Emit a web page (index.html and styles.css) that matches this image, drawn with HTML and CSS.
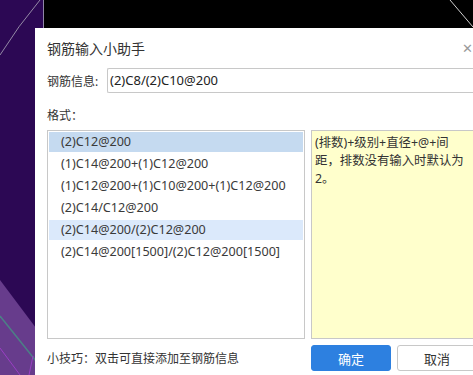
FILE: index.html
```html
<!DOCTYPE html>
<html lang="zh-CN">
  <head>
    <meta charset="UTF-8" />
    <title>钢筋输入小助手</title>
    <link rel="stylesheet" href="styles.css">
  </head>
  <body>
    <svg class="backdrop" width="473" height="375" viewBox="0 0 473 375">
      <rect x="0" y="0" width="473" height="375" fill="#2c0854" />
      <rect x="43" y="0" width="430" height="30" fill="#000000" />
      <line x1="43.5" y1="0" x2="43.5" y2="30" stroke="#8f86a6" stroke-width="1" />
      <path d="M0 55 Q18 26 40 0" fill="none" stroke="#948aa6" stroke-width="1" />
      <line x1="450" y1="0" x2="473" y2="27" stroke="#cfcfcf" stroke-width="1" />
      <polygon points="0,280 36,328 36,375 0,375" fill="#673c8c" />
      <line x1="0" y1="316" x2="36" y2="361" stroke="#4c7f86" stroke-width="1.5" />
      <line x1="0" y1="348" x2="20" y2="375" stroke="#9a3fc4" stroke-width="1" />
      <line x1="33" y1="356" x2="29" y2="375" stroke="#9a3fc4" stroke-width="1" />
    </svg>

    <div class="dialog">
      <div class="title-bar">
        <span class="title">钢筋输入小助手</span>
        <span class="close">&#x2715;</span>
      </div>

      <div class="field-row">
        <label class="field-label">钢筋信息:</label>
        <div class="field-input">(2)C8/(2)C10@200</div>
      </div>

      <div class="section-label">格式：</div>

      <div class="panes">
        <ul class="format-list">
          <li class="format-item selected">(2)C12@200</li>
          <li class="format-item">(1)C14@200+(1)C12@200</li>
          <li class="format-item">(1)C12@200+(1)C10@200+(1)C12@200</li>
          <li class="format-item">(2)C14/C12@200</li>
          <li class="format-item hover">(2)C14@200/(2)C12@200</li>
          <li class="format-item">(2)C14@200[1500]/(2)C12@200[1500]</li>
        </ul>
        <div class="hint">
          <p class="hint-text">(排数)+级别+直径+@+间距，排数没有输入时默认为2。</p>
        </div>
      </div>

      <div class="footer">
        <span class="tip">小技巧：双击可直接添加至钢筋信息</span>
        <button class="btn btn-primary">确定</button>
        <button class="btn">取消</button>
      </div>
    </div>
  </body>
</html>
```

FILE: styles.css
```css
* {
  margin: 0;
  padding: 0;
  box-sizing: border-box;
  font-family: "Noto Sans", "Noto Sans CJK SC", sans-serif;
}

body {
  width: 473px;
  height: 375px;
  overflow: hidden;
  position: relative;
  background-color: #2c0854;
  color: #333333;
  padding: 28px 0 0 35px;
}

.backdrop {
  position: absolute;
  top: 0;
  left: 0;
  z-index: 0;
}

.dialog {
  position: relative;
  z-index: 1;
  width: 457px;
  height: 360px;
  background-color: #ffffff;
  padding: 0 15px 0 12px;
}

.title-bar {
  height: 40px;
  display: flex;
  align-items: center;
  justify-content: space-between;
}

.title {
  font-size: 14px;
  color: #333333;
}

.close {
  font-size: 13px;
  color: #9a9a9a;
  margin-right: 4px;
}

.field-row {
  display: flex;
  align-items: center;
  height: 25px;
}

.field-label {
  font-size: 12px;
  width: 60px;
  color: #333333;
}

.field-input {
  flex: 1;
  height: 25px;
  line-height: 23px;
  border: 1px solid #c8c8c8;
  border-right: none;
  border-radius: 2px 0 0 2px;
  padding-left: 2px;
  font-size: 13px;
  color: #222222;
}

.section-label {
  font-size: 12px;
  line-height: 18px;
  margin: 14px 0 5px;
}

.panes {
  display: flex;
  gap: 6px;
  height: 209px;
}

.format-list {
  list-style: none;
  width: 258px;
  border: 1px solid #c8c8c8;
  padding: 1px;
}

.format-item {
  height: 20px;
  line-height: 20px;
  margin-bottom: 2px;
  padding-left: 12px;
  font-size: 12.6px;
  color: #3a3a3a;
  white-space: nowrap;
}

.format-item.selected {
  background-color: #c5daf0;
}

.format-item.hover {
  background-color: #dbe9fb;
}

.hint {
  flex: 1;
  background-color: #ffffcc;
  border: 1px solid #c8c8c8;
  border-right: none;
  padding: 3px 3px;
}

.hint-text {
  width: 152px;
  font-size: 12.4px;
  line-height: 18px;
  color: #333333;
}

.footer {
  display: flex;
  align-items: center;
  gap: 6px;
  margin-top: 6px;
}

.tip {
  flex: 1;
  font-size: 12px;
}

.btn {
  width: 80px;
  height: 26px;
  border: 1px solid #c8c8c8;
  border-radius: 3px;
  background-color: #ffffff;
  font-size: 13px;
  color: #333333;
}

.btn-primary {
  background-color: #2d80e0;
  border-color: #2d80e0;
  color: #ffffff;
}
```
